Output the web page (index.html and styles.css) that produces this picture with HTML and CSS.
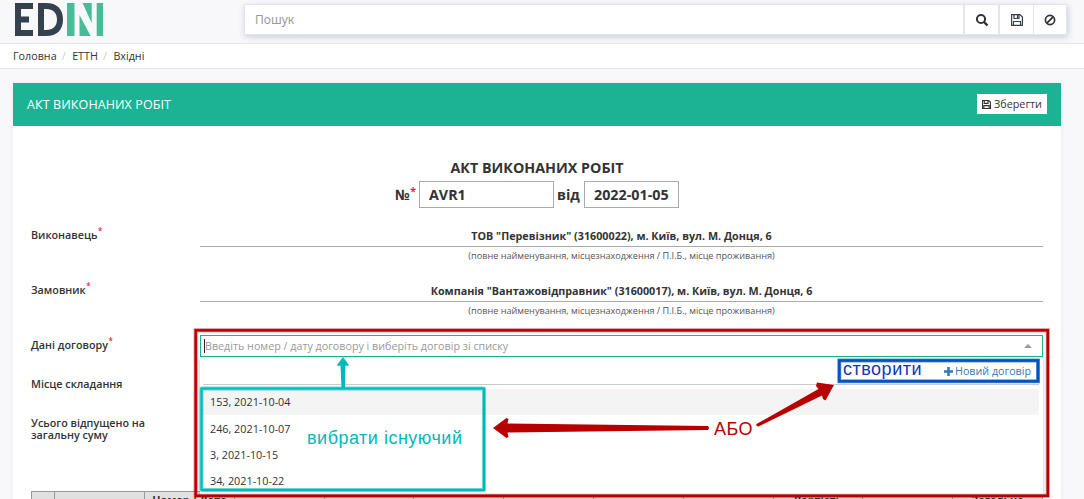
FILE: index.html
```html
<!DOCTYPE html>
<html lang="uk">
<head>
<meta charset="utf-8">
<title>Акт виконаних робіт</title>
<link rel="stylesheet" href="styles.css">
</head>
<body>
<header class="topbar">
  <svg class="logo" width="90" height="34" viewBox="0 0 90 34">
    <g fill="#36414e">
      <path d="M0 0H18V6H6V13.500H14V19.500H6V27H18V33H0Z"/>
      <path fill-rule="evenodd" d="M23 0H31C42 0 48 6 48 16.500S42 33 31 33H23ZM29 6V27H31C38 27 42 23 42 16.500S38 6 31 6Z"/>
    </g>
    <path fill="#45be97" d="M52 0H59.500V33H52ZM64.500 12L75.700 33H64.500ZM67.500 0H76.700V20ZM81.700 0H88V33H81.700Z"/>
  </svg>
  <div class="search">
    <div class="search-input">Пошук</div>
    <button class="tool"><svg width="14" height="14" viewBox="0 0 14 14" fill="none" stroke="#333"><circle cx="6" cy="6" r="4.100" stroke-width="2"/><path d="M9 9L12.500 12.500" stroke-width="2.400"/></svg></button>
    <button class="tool"><svg width="12" height="12" viewBox="0 0 12 12" fill="none" stroke="#3a4248" stroke-width="1.200"><path d="M.6.600H9L11.400 3V11.400H.6ZM3 .6V4.500H8V.6M2.500 11.400V7.500H9.500V11.400M6.500 1V4"/></svg></button>
    <button class="tool last"><svg width="12" height="12" viewBox="0 0 12 12" fill="none" stroke="#333" stroke-width="1.700"><circle cx="6" cy="6" r="4.600"/><path d="M2.800 9.200L9.200 2.800"/></svg></button>
  </div>
</header>
<nav class="crumbs"><span>Головна</span><i>/</i><span>ЕТТН</span><i>/</i><span>Вхідні</span></nav>
<main class="card">
  <div class="card-head">
    <span class="head-text">АКТ ВИКОНАНИХ РОБІТ</span>
    <button class="save"><svg width="9" height="9" viewBox="0 0 12 12" fill="none" stroke="#333" stroke-width="1.500"><path d="M.7.700H9L11.300 3V11.300H.7ZM3 .7V4.500H8V.7M2.500 11.300V7.500H9.500V11.300"/></svg><span>Зберегти</span></button>
  </div>
  <div class="card-body">
    <h1 class="title">АКТ ВИКОНАНИХ РОБІТ</h1>
    <div class="number-row"><span class="numero">№<sup>*</sup></span><span class="field number">AVR1</span><span class="from">від</span><span class="field date">2022-01-05</span></div>
    <div class="row party"><label>Виконавець<sup>*</sup></label><div class="value"><b>ТОВ "Перевізник" (31600022), м. Київ, вул. М. Донця, 6</b><small>(повне найменування, місцезнаходження / П.І.Б., місце проживання)</small></div></div>
    <div class="row party"><label>Замовник<sup>*</sup></label><div class="value"><b>Компанія "Вантажовідправник" (31600017), м. Київ, вул. М. Донця, 6</b><small>(повне найменування, місцезнаходження / П.І.Б., місце проживання)</small></div></div>
    <div class="row contract"><label>Дані договору<sup>*</sup></label><div class="select"><span>Введіть номер / дату договору і виберіть договір зі списку</span><i class="caret"></i>
      <div class="menu">
        <div class="menu-head"><a><svg width="9" height="9" viewBox="0 0 9 9"><path fill="#337ab7" d="M3.200 0H5.800V3.200H9V5.800H5.800V9H3.200V5.800H0V3.200H3.200Z"/></svg><span>Новий договір</span></a></div>
        <ul class="options"><li class="active">153, 2021-10-04</li><li>246, 2021-10-07</li><li>3, 2021-10-15</li><li>34, 2021-10-22</li></ul>
      </div>
    </div></div>
    <div class="row place"><label>Місце складання</label></div>
    <div class="row total"><label>Усього відпущено на загальну суму</label></div>
    <div class="table">
      <span></span><span></span><span>Номер / Дата</span><span></span><span></span><span></span><span></span><span></span><span></span><span>Вартість</span><span></span><span>Загальна</span>
    </div>
  </div>
</main>
<svg class="notes" width="1084" height="499" viewBox="0 0 1084 499">
  <g fill="none">
    <rect x="195.700" y="330.300" width="852.100" height="165.500" stroke="#b80000" stroke-opacity=".5" stroke-width="4"/>
    <rect x="195.700" y="330.300" width="852.100" height="165.500" stroke="#b80000" stroke-width="2.400"/>
    <rect x="201.500" y="388.500" width="282.500" height="101.500" rx="1" stroke="#00b9bb" stroke-opacity=".6" stroke-width="4"/>
    <rect x="201.500" y="388.500" width="282.500" height="101.500" stroke="#00b9bb" stroke-width="2"/>
    <rect x="839.300" y="360.500" width="198.700" height="20.800" stroke="#0054bc" stroke-opacity=".6" stroke-width="4"/>
    <rect x="839.300" y="360.500" width="198.700" height="20.800" stroke="#0054bc" stroke-width="2.600"/>
  </g>
  <path fill="#00b9bb" d="M343 357L349 365L347.500 366L345.500 365.500L345 388H341.500L340.500 365.500L338 366L337 365Z"/>
  <path fill="#b80000" d="M493 428L506.500 418L508.500 419L507.500 423.500L708 426Q710 428 708 430L507.500 432.500L508.500 437L506.500 438Z"/>
  <path fill="#b80000" d="M834 385L825.500 400.500L823 399L822 395.500L758.500 426.500Q755.500 426.500 756.500 424L818.500 389L816 386L817 382.500Z"/>
  <text x="307" y="444" font-size="18" textLength="155" fill="#00b9bb">вибрати існуючий</text>
  <text x="843" y="375" font-size="18" textLength="78.500" fill="#1236ba">створити</text>
  <text x="714" y="435" font-size="18" textLength="38.500" fill="#b80000">АБО</text>
</svg>
</body>
</html>
```
FILE: styles.css
```css
* { box-sizing: border-box; }
body { margin: 0; width: 1084px; height: 499px; overflow: hidden; position: relative; background: #f8f8fb; color: #333; font: 10.750px/14px "Open Sans", "Noto Sans", sans-serif; }
button { border: 0; padding: 0; font: inherit; color: inherit; }
.topbar { height: 44px; display: flex; justify-content: space-between; align-items: flex-start; padding: 3px 17px 0 15px; border-bottom: 1px solid #e3e5e8; }
.logo { display: block; }
.search { display: flex; width: 823px; height: 31px; margin-top: 1px; background: #fff; border: 1px solid #e4e5e8; box-shadow: 1px 2px 6px rgba(40, 50, 90, .22); }
.search-input { flex: 1; padding-left: 10px; font: 12px/29px "Noto Sans", sans-serif; color: #999; }
.tool { display: flex; align-items: center; justify-content: center; width: 35px; background: #fff; border-left: 2px solid #e4e5e8; }
.tool.last { width: 33px; border-left-width: 1px; }
.crumbs { display: flex; height: 25px; padding-left: 13px; background: #fff; border-bottom: 1px solid #e3e5e8; line-height: 25px; }
.crumbs i { width: 15.500px; padding-left: 5px; color: #ccc; font-style: normal; }
.card { width: 1048px; height: 430px; margin: 14px 0 0 13px; background: #fff; box-shadow: 0 0 5px rgba(0, 0, 0, .06); }
.card-head { height: 43px; display: flex; align-items: center; justify-content: space-between; padding: 0 14px 1px; background: #1bb394; color: #fff; }
.head-text { padding-top: 1px; font-size: 12.500px; font-weight: 500; letter-spacing: .1px; }
.save { display: flex; align-items: center; justify-content: center; gap: 3px; width: 70px; height: 20px; background: #fff; color: #333; }
.card-body { padding: 35px 18px 0; }
.title { margin: 0; text-align: center; font-size: 14.300px; line-height: 14px; font-weight: 700; }
.number-row { display: flex; align-items: center; height: 27px; margin: 6px 0 0 364px; font-size: 14.300px; font-weight: 700; }
sup { margin-left: .5px; color: #ed1c4c; font-size: .75em; line-height: 0; vertical-align: 5px; }
.numero { width: 24px; white-space: nowrap; }
.field { height: 27px; padding-left: 9px; border: 1px solid #aaa; line-height: 26px; }
.number { width: 135px; }
.from { width: 30px; padding-left: 3px; }
.date { width: 95px; }
.row { display: flex; font-weight: 600; }
.row label { width: 169px; flex: none; }
.party { height: 55px; }
.number-row + .party { margin-top: 20px; }
.party .value { width: 843px; padding-top: 1px; text-align: center; }
.party b { display: block; height: 18px; border-bottom: 1px solid #aaa; font-weight: 700; }
.party small { display: block; font-size: 9.150px; font-weight: 400; line-height: 18px; color: #555; }
.contract { height: 39px; }
.select { position: relative; display: flex; align-items: center; justify-content: space-between; width: 843px; height: 22px; margin-top: -3px; padding: 0 10px 0 3px; border: 1px solid #1bb394; font-size: 10.720px; font-weight: 400; color: #999; }
.select > span { border-left: 1px solid #222; }
.caret { border: 4px solid transparent; border-top: 0; border-bottom-color: #999; }
.menu { position: absolute; z-index: 1; top: 22px; left: -1px; width: 843px; height: 138px; padding: 0 4px 0 3px; background: #fff; box-shadow: 0 1px 4px rgba(0, 0, 0, .25); color: #333; }
.menu-head { display: flex; justify-content: flex-end; height: 27px; padding: 6px 8px 0 0; border-bottom: 1px solid #c5ccd1; }
.menu-head a { display: flex; align-items: center; gap: 2px; height: 14px; color: #337ab7; }
.options { list-style: none; margin: 4px 0 0; padding: 0; }
.options li { height: 26px; padding-left: 7px; font-size: 10.800px; line-height: 26px; }
.options .active { background: #f4f4f4; border-radius: 3px; margin-bottom: 1px; }
.place { height: 39px; }
.total label { width: 130px; line-height: 12px; padding-top: 1px; }
.total { height: 75px; }
.table { display: grid; grid-template-columns: 23px 90px 90px 90px 89px 90px 90px 90px 90px 89px 90px 90px; width: 1012px; height: 30px; border: 1px solid #999; background: #e0e0e0; }
.table span { border-right: 1px solid #999; text-align: center; font-size: 10.800px; font-weight: 700; line-height: 15px; }
.notes { position: absolute; z-index: 2; top: 0; left: 0; pointer-events: none; font-family: "Liberation Sans", sans-serif; }
```
